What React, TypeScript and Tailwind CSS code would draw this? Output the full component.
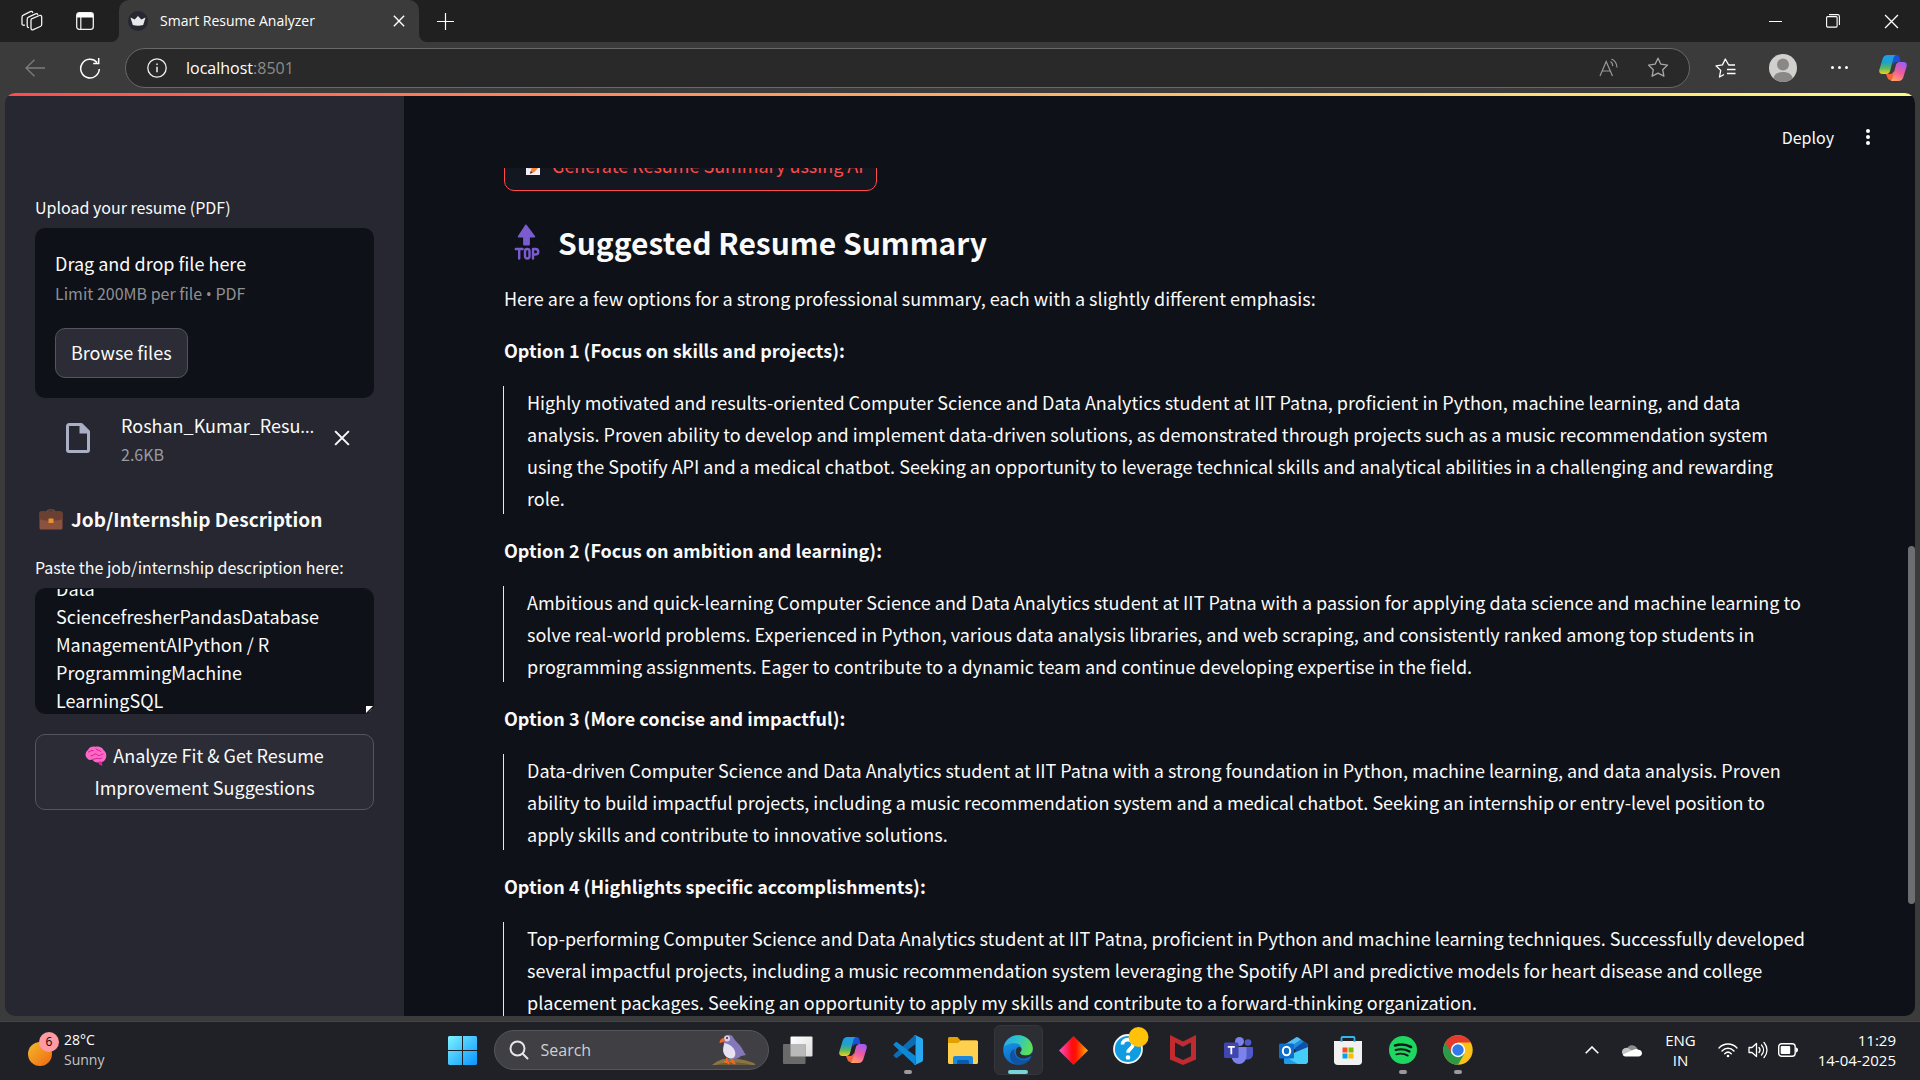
import { useLayoutEffect, useRef } from "react";
import type { ReactNode } from "react";

const jobText =
  "Data\nSciencefresherPandasDatabase\nManagementAIPython / R\nProgrammingMachine\nLearningSQL";

const options = [
  {
    title: "Option 1 (Focus on skills and projects):",
    body: "Highly motivated and results-oriented Computer Science and Data Analytics student at IIT Patna, proficient in Python, machine learning, and data analysis. Proven ability to develop and implement data-driven solutions, as demonstrated through projects such as a music recommendation system using the Spotify API and a medical chatbot. Seeking an opportunity to leverage technical skills and analytical abilities in a challenging and rewarding role.",
  },
  {
    title: "Option 2 (Focus on ambition and learning):",
    body: "Ambitious and quick-learning Computer Science and Data Analytics student at IIT Patna with a passion for applying data science and machine learning to solve real-world problems. Experienced in Python, various data analysis libraries, and web scraping, and consistently ranked among top students in programming assignments. Eager to contribute to a dynamic team and continue developing expertise in the field.",
  },
  {
    title: "Option 3 (More concise and impactful):",
    body: "Data-driven Computer Science and Data Analytics student at IIT Patna with a strong foundation in Python, machine learning, and data analysis. Proven ability to build impactful projects, including a music recommendation system and a medical chatbot. Seeking an internship or entry-level position to apply skills and contribute to innovative solutions.",
  },
  {
    title: "Option 4 (Highlights specific accomplishments):",
    body: "Top-performing Computer Science and Data Analytics student at IIT Patna, proficient in Python and machine learning techniques. Successfully developed several impactful projects, including a music recommendation system leveraging the Spotify API and predictive models for heart disease and college placement packages. Seeking an opportunity to apply my skills and contribute to a forward-thinking organization.",
  },
];

/* ---------- Icons ---------- */

function CopilotIcon({ id }: { id: string }) {
  return (
    <svg viewBox="0 0 28 26" className="h-[26px] w-7" aria-hidden="true">
      <defs>
        <linearGradient id={id + "a"} x1="0" y1="0" x2="0" y2="1">
          <stop offset="0" stopColor="#1c9cf0" />
          <stop offset="0.4" stopColor="#23a0c8" />
          <stop offset="0.7" stopColor="#5fb85a" />
          <stop offset="1" stopColor="#f6cf1c" />
        </linearGradient>
        <linearGradient id={id + "b"} x1="0.7" y1="0" x2="0.3" y2="1">
          <stop offset="0" stopColor="#a05cf5" />
          <stop offset="0.5" stopColor="#ee5a9e" />
          <stop offset="1" stopColor="#ffa06a" />
        </linearGradient>
      </defs>
      <path d="M13 0h4.500c1.700 0 2.600 1 3 2.500L21.600 7h-4c-2 0-3 1-3.600 3l-1-4z" fill="#1a50d8" />
      <path d="M7 19h4c2 0 3-1 3.500-3l1.500 5c.5 2-.5 4-2.500 4h-2c-2 0-2.800-1-3.300-3z" fill="#f4643a" />
      <path d="M8.500 0H17c-1.600.5-2.300 2-2.800 4l-3 11.500c-.6 2.300-1.700 3.500-4 3.500H3.500C.8 19-.3 17 .4 14.500L3.600 4C4.400 1.500 6 0 8.500 0z" fill={"url(#" + id + "a)"} />
      <path d="M19.500 26H11c1.600-.5 2.300-2 2.800-4l3-11.500c.6-2.300 1.700-3.500 4-3.500h3.700c2.700 0 3.800 2 3.100 4.500L24.400 22c-.8 2.500-2.400 4-4.900 4z" fill={"url(#" + id + "b)"} />
    </svg>
  );
}

function WorkspacesIcon() {
  return (
    <svg viewBox="0 0 22 22" className="size-[22px]" fill="none" stroke="#f2f2f2" strokeWidth="1.300" strokeLinejoin="round" strokeLinecap="round" aria-hidden="true">
      <path d="M10.500 8.800l8-3.300c1.200-.4 2.200.2 2.200 1.400v7.500c0 1-.5 1.700-1.400 2.100l-7 3.200c-1.200.5-2.300-.1-2.300-1.400v-7.500c0-.9 0-1.600.5-2z" />
      <path d="M7.500 17.500c-1 0-1.300-.6-1.300-1.500V9.200c0-1 .4-1.700 1.300-2.100l7-3.300c1.100-.5 2-.2 2.200.8" />
      <path d="M3.500 15.200C2 15.400 1 15 1 13.700V7.200c0-1 .4-1.700 1.300-2.100l7-3.500c1.100-.5 2-.2 2.400.8" />
    </svg>
  );
}

function TabActionsIcon() {
  return (
    <svg viewBox="0 0 18 18" className="size-[18px]" aria-hidden="true">
      <rect x="0.700" y="0.700" width="16.600" height="16.600" rx="2.500" fill="none" stroke="#f2f2f2" strokeWidth="1.300" />
      <path d="M1 5.500V3a2 2 0 0 1 2-2h12a2 2 0 0 1 2 2v2.500z" fill="#fff" />
      <path d="M4.800 5v12" stroke="#f2f2f2" strokeWidth="1.200" />
    </svg>
  );
}

function CrownIcon() {
  return (
    <svg viewBox="0 0 20 20" className="size-5" aria-hidden="true">
      <circle cx="10" cy="10" r="10" fill="#262730" />
      <path d="M2.500 6.500l4.200 2.100L10 5l3.300 3.600 4.200-2.100-2.300 7.500c-3 1-7.400 1-10.400 0z" fill="#e8e8ec" />
    </svg>
  );
}

function Cross({ className, width = 1.3 }: { className: string; width?: number }) {
  return (
    <svg viewBox="0 0 14 14" className={className} stroke="currentColor" strokeWidth={width} aria-hidden="true">
      <path d="M1 1l12 12M13 1L1 13" />
    </svg>
  );
}

function BrainIcon() {
  return (
    <svg viewBox="0 0 22 20" className="mr-[6px] inline h-5 w-[22px] align-[-3px]" aria-hidden="true">
      <path d="M2 12C-.5 10 .5 5.500 3 4 4 1 8 0 10.500.8 14 0 17.500 1.500 18.500 4c3 2 3.500 6.500 2 9-1 2.200-2.500 2.800-3.700 2.800l.4 3.700c-2.200-.3-3.200-1.500-3.700-3.200C9.500 17 8 14.500 7.500 13.500 5 14.500 3 14 2 12z" fill="#fc69c4" />
      <path d="M3.500 6c2-.5 2.500-2 4.500-1.500M11 3c1.500 1.800 4 .8 5 2.600M6 10c2 0 2.500-2 4.500-2s2 2 4 1.500 2-2 3.500-1.500M8 13.200c2 .3 2.500-1 4.500-.8s2.500 1 4.500-.6" fill="none" stroke="#e01496" strokeWidth="1" strokeLinecap="round" />
      <path d="M13.500 15.500l3.300.3.400 3.700c-2.200-.3-3.300-2-3.700-4z" fill="#e8169e" />
    </svg>
  );
}

function BriefcaseIcon() {
  return (
    <svg viewBox="0 0 24 21" className="ml-1 h-[21px] w-6 shrink-0" aria-hidden="true">
      <path d="M8 3.500C8 1.500 9 .8 12 .8s4 .7 4 2.700" fill="none" stroke="#6d4534" strokeWidth="1.400" />
      <rect x="0.500" y="2.500" width="23" height="18" rx="1.500" fill="#8b5240" />
      <path d="M.5 4A1.500 1.500 0 0 1 2 2.500h20A1.500 1.500 0 0 1 23.500 4v6.200c-7 2-16 2-23 0z" fill="#6b4032" />
      <rect x="9.500" y="9.500" width="5" height="4.500" rx="0.500" fill="#e8912d" />
    </svg>
  );
}

function MemoIcon() {
  return (
    <svg viewBox="0 0 22 22" className="size-[22px]" aria-hidden="true">
      <path d="M4 1h14v20H4z" fill="#f3eef8" />
      <path d="M6 6h9M6 10h7M6 14h5" stroke="#c3b7d0" strokeWidth="1.200" />
      <path d="M17.500 6l3 3-8 9-4.500 1.800 1.300-4.800z" fill="#ff822d" />
      <path d="M8 19.800l.8-2.700 1.900 1.600z" fill="#402a32" />
    </svg>
  );
}

function TopIcon() {
  return (
    <svg viewBox="0 0 28 36" className="h-9 w-7 shrink-0" aria-hidden="true">
      <path d="M14.500.8L23 12c.5.8.1 1.400-.7 1.400h-4.400v6.800c0 .8-.4 1.200-1.200 1.200h-4.400c-.8 0-1.200-.4-1.200-1.200v-6.800H6.700c-.8 0-1.200-.6-.7-1.400L13.300.8c.4-.5.8-.5 1.200 0z" fill="#7b5cd0" />
      <g fill="none" stroke="#7b5cd0" strokeWidth="2.400" strokeLinecap="round" strokeLinejoin="round">
        <path d="M3.800 25h6.800M7.200 25v9.500" />
        <rect x="13" y="25" width="4.500" height="9.500" rx="2.200" />
        <path d="M21 34.500V25h2.500a2.700 2.700 0 0 1 0 5.500H21" />
      </g>
    </svg>
  );
}

function WindowsIcon() {
  return (
    <svg viewBox="0 0 29 29" className="size-[29px]" aria-hidden="true">
      <defs>
        <linearGradient id="win" x1="0" y1="0" x2="29" y2="29" gradientUnits="userSpaceOnUse">
          <stop offset="0" stopColor="#7df3ff" />
          <stop offset="1" stopColor="#0894ff" />
        </linearGradient>
      </defs>
      <path d="M1 0h13v14H0V1zM15 0h13l1 1v13H15zM0 15h14v14H1l-1-1zM15 15h14v13l-1 1H15z" fill="url(#win)" />
    </svg>
  );
}

function TaskViewIcon() {
  return (
    <svg viewBox="0 0 30 28" className="h-7 w-[30px]" aria-hidden="true">
      <defs>
        <linearGradient id="tv" x1="0" y1="0" x2="1" y2="1">
          <stop offset="0" stopColor="#fff" />
          <stop offset="1" stopColor="#dcdcdc" />
        </linearGradient>
      </defs>
      <rect x="7.500" y="0.500" width="22" height="20" rx="1" fill="url(#tv)" />
      <rect x="0" y="8" width="22.500" height="20" rx="1" fill="#6a6a6a" />
      <path d="M7.500 8h15v12.500h-15z" fill="#b9b9b9" />
    </svg>
  );
}

function VsCodeIcon() {
  return (
    <svg viewBox="0 0 30 30" className="size-[30px]" aria-hidden="true">
      <path d="M22 0L1 19.500c-.6.500-.6 1.200 0 1.700l1.700 1.500c.5.400 1 .4 1.500 0L22.500 9z" fill="#0b6db5" />
      <path d="M22 30L1 10.500c-.6-.5-.6-1.200 0-1.700l1.700-1.500c.5-.4 1-.4 1.500 0L22.500 21z" fill="#0f87d4" />
      <path d="M22 0l7 3.300c.6.300 1 .9 1 1.600v20.200c0 .7-.4 1.300-1 1.600L22 30c-.7.200-1.300 0-1.800-.5.900.7 2.300.1 2.300-1.200V1.700c0-1.300-1.400-1.900-2.300-1.200.5-.5 1.100-.7 1.800-.5z" fill="#27a9f2" />
    </svg>
  );
}

function ExplorerIcon() {
  return (
    <svg viewBox="0 0 30 27" className="h-[27px] w-[30px]" aria-hidden="true">
      <path d="M0 1.500C0 .7.700 0 1.500 0h8l3 3.500H28c1.100 0 2 .7 2 1.800V10H0z" fill="#e2a100" />
      <path d="M0 6h10l3-2.500h15.500c.8 0 1.500.7 1.500 1.500v20.500c0 .8-.7 1.500-1.500 1.500h-27C.7 27 0 26.300 0 25.500z" fill="#ffd04e" />
      <path d="M5 27v-6c0-1.100.9-2 2-2h16c1.100 0 2 .9 2 2v6z" fill="#1c87dc" />
      <path d="M9 27v-2.500c0-.8.700-1.500 1.500-1.500h9c.8 0 1.500.7 1.500 1.500V27z" fill="#0a5cab" />
    </svg>
  );
}

function EdgeIcon() {
  return (
    <svg viewBox="0 0 30 30" className="size-[30px]" aria-hidden="true">
      <defs>
        <linearGradient id="e1" x1="0" y1="0.200" x2="1" y2="0.500">
          <stop offset="0" stopColor="#2aa8ee" />
          <stop offset="0.500" stopColor="#2fc6c4" />
          <stop offset="1" stopColor="#62e04c" />
        </linearGradient>
        <linearGradient id="e2" x1="0" y1="0" x2="0.400" y2="1">
          <stop offset="0" stopColor="#1aa0ea" />
          <stop offset="1" stopColor="#0b64c8" />
        </linearGradient>
      </defs>
      <circle cx="15" cy="15" r="14.800" fill="url(#e2)" />
      <path d="M.8 12C2 5 8 .2 15 .2 24 .2 29.800 7 29.800 13.500c0 4.200-3.200 7-7 7-3.500 0-5.800-1.300-5.800-2.800 0-.8 1.500-1.500 1.500-3.800 0-3-3-5.700-7.300-5.700C6.500 8.200 2.500 10 .8 12z" fill="url(#e1)" />
      <path d="M11.500 14c-1.300 7 4.500 12 10.500 11.500 2.500-.2 4.600-1.300 5.800-2.200C25 28 20.500 29.800 16 29.800 9 29.800 5.500 23 7.500 18c.9-2.200 2.400-3.400 4-4z" fill="#10549f" />
      <path d="M14.500 12.500c-1 1-1.800 2.400-1.800 4.200 0 4.700 4.500 7.300 9 6.800 2.500-.3 4.200-1.200 5.500-2.200l2.800 0v-4c-2 2.500-4.500 3.200-7.200 3.200-3.500 0-5.800-1.300-5.800-2.800 0-.8 1.500-1.500 1.500-3.300 0-1.200-1-2.400-2-2.400-.8 0-1.500.1-2 .5z" fill="#2d2e33" />
    </svg>
  );
}

function DiamondIcon() {
  return (
    <svg viewBox="0 0 29 29" className="size-[29px]" aria-hidden="true">
      <defs>
        <linearGradient id="dia" x1="0" y1="0" x2="1" y2="0">
          <stop offset="0" stopColor="#ff4fd0" />
          <stop offset="0.450" stopColor="#ff0a12" />
          <stop offset="0.600" stopColor="#ff1800" />
          <stop offset="1" stopColor="#ffb400" />
        </linearGradient>
      </defs>
      <path d="M14.500 0L29 14.500 14.500 29 0 14.500z" fill="url(#dia)" />
    </svg>
  );
}

function HelpIcon() {
  return (
    <svg viewBox="0 0 36 38" className="-mt-2 ml-1.5 h-[38px] w-9" aria-hidden="true">
      <circle cx="15" cy="22" r="14" fill="#0f9ce0" stroke="#f2f6f8" strokeWidth="1.800" />
      <path d="M9.500 17.500c0-6.500 10.500-6.500 10.500 0 0 4-5 4-5 8.200" fill="none" stroke="#fff" strokeWidth="3.600" />
      <circle cx="15" cy="30.500" r="2.300" fill="#fff" />
      <circle cx="25.500" cy="10" r="10" fill="#ffc10a" />
    </svg>
  );
}

function McAfeeIcon() {
  return (
    <svg viewBox="0 0 26 30" className="h-[30px] w-[26px]" aria-hidden="true">
      <path d="M0 0l13 6.500L26 0v24.500L13 30 0 24.500zM5 7.500v13.700l8 3.800 8-3.800V7.500l-8 4.300z" fill="#bf2b2e" fillRule="evenodd" />
    </svg>
  );
}

function TeamsIcon() {
  return (
    <svg viewBox="0 0 29 27" className="h-[27px] w-[29px]" aria-hidden="true">
      <circle cx="24" cy="5.500" r="3.300" fill="#5059c9" />
      <path d="M19 10h9c.6 0 1 .4 1 1v6a5.500 5.500 0 0 1-8 5z" fill="#5059c9" />
      <circle cx="15.500" cy="4.500" r="4.500" fill="#7b83eb" />
      <path d="M9 10h12.500c.6 0 1 .4 1 1v8.500a7.500 7.500 0 0 1-15 0V11z" fill="#7b83eb" />
      <rect x="0" y="5.500" width="14.500" height="15.500" rx="1.500" fill="#4046ae" />
      <path d="M3.800 9.800h7M7.300 9.800v7.500" stroke="#fff" strokeWidth="1.800" />
    </svg>
  );
}

function OutlookIcon() {
  return (
    <svg viewBox="0 0 29 27" className="h-[27px] w-[29px]" aria-hidden="true">
      <path d="M5 8L17 .6c.6-.4 1.400-.4 2 0L28 6.500c.6.400 1 1 1 1.700V12H5z" fill="#1b8bdc" />
      <path d="M11 4.200L17 .6c.6-.4 1.400-.4 2 0L22 2.500 12 9H5V8z" fill="#53bdf5" />
      <path d="M16 11l9-6.500 3.500 2.500.5 4-12 9z" fill="#0f4fa8" />
      <path d="M5 20l24-10v14.500c0 1.400-1.100 2.500-2.500 2.500h-19A2.500 2.500 0 0 1 5 24.500z" fill="#45cdf7" />
      <path d="M5 19l14 8H7.500A2.500 2.500 0 0 1 5 24.500z" fill="#1b9ce8" />
      <rect x="0" y="6.500" width="15" height="15" rx="1.500" fill="#0d6ed2" />
      <ellipse cx="7.500" cy="14" rx="3.700" ry="4.300" fill="none" stroke="#fff" strokeWidth="2" />
    </svg>
  );
}

function StoreIcon() {
  return (
    <svg viewBox="0 0 28 29" className="h-[29px] w-7" aria-hidden="true">
      <path d="M0 5h28v20.500c0 2-1.500 3.500-3.500 3.500h-21C1.500 29 0 27.500 0 25.500z" fill="#f1f1f1" />
      <path d="M7.500 6V2c0-.6.400-1 1-1h11c.6 0 1 .4 1 1v4" fill="none" stroke="#31b5ef" strokeWidth="1.800" />
      <path d="M8.500 11.500h5v5h-5z" fill="#f25022" />
      <path d="M14.500 11.500h5v5h-5z" fill="#7fba00" />
      <path d="M8.500 17.500h5v5h-5z" fill="#00a4ef" />
      <path d="M14.500 17.500h5v5h-5z" fill="#ffb900" />
    </svg>
  );
}

function SpotifyIcon() {
  return (
    <svg viewBox="0 0 28 28" className="size-7" aria-hidden="true">
      <circle cx="14" cy="14" r="14" fill="#1ed760" />
      <g fill="none" stroke="#15181a" strokeLinecap="round">
        <path d="M6 9.500c5.500-1.500 11.500-1 16 1.500" strokeWidth="2.600" />
        <path d="M6.700 14c4.800-1.300 9.800-.8 13.800 1.500" strokeWidth="2.200" />
        <path d="M7.300 18.300c4-1.100 8-.7 11.500 1.300" strokeWidth="1.800" />
      </g>
    </svg>
  );
}

function ChromeIcon() {
  return (
    <svg viewBox="0 0 30 30" className="size-[30px]" aria-hidden="true">
      <circle cx="15" cy="15" r="14.700" fill="#fbc116" />
      <path d="M15 15L2.300 7.600a14.700 14.700 0 0 0 12.700 22.100l6.400-11z" fill="#2b9a47" />
      <path d="M2.300 7.600a14.700 14.700 0 0 1 25.500 0H15L8.600 18.700z" fill="#e33b2e" />
      <circle cx="15" cy="15" r="7.200" fill="#fff" />
      <circle cx="15" cy="15" r="5.700" fill="#2f7bea" />
    </svg>
  );
}

function PuffinIcon() {
  return (
    <svg viewBox="0 0 44 32" className="h-8 w-11" aria-hidden="true">
      <path d="M0 31c5-4 10-7 20-6.500 10 .5 14 2 19 3.500 3 .9 4 1.500 4.500 3z" fill="#8a7444" />
      <path d="M4 31c6-2 14-3 22-2.500 6 .4 10 1.500 14 2.500z" fill="#6d5c3c" />
      <path d="M12 4c1-3.500 7-4.500 9-1 1.500 3 3.500 4.500 7 8.500 2.500 3 4 7 6 9.500l-5 1c-2 2-5 3.500-9 3-6-1-10-6-8.500-12 .7-3-.5-6 .5-9z" fill="#8478b8" />
      <path d="M12.500 9c-1.500 5-2.500 9 1 13 2 2.200 5 3 7.500 2 3-1.500 3-6 .5-9.500S16 10 12.500 9z" fill="#e6e2f2" />
      <circle cx="15" cy="4.500" r="3" fill="#d9d2ea" />
      <circle cx="15" cy="4" r="1" fill="#2b2438" />
      <path d="M12 4c-2.500 0-4.500 2-4.500 5 2-.5 4-.8 5.500-2.500z" fill="#f2682c" />
      <path d="M15 24l-1 5M20 25l1 4.500M12 28l3-1 2 3M18 28l3-1 2 3" stroke="#f26a21" strokeWidth="1.800" fill="none" />
    </svg>
  );
}

/* ---------- Taskbar pieces ---------- */

type App = { name: string; icon: ReactNode; state?: "active" | "running" };

const apps: App[] = [
  { name: "Task View", icon: <TaskViewIcon /> },
  { name: "Copilot", icon: <CopilotIcon id="ct" /> },
  { name: "Visual Studio Code", icon: <VsCodeIcon />, state: "running" },
  { name: "File Explorer", icon: <ExplorerIcon /> },
  { name: "Microsoft Edge", icon: <EdgeIcon />, state: "active" },
  { name: "Diamond", icon: <DiamondIcon /> },
  { name: "Get Help", icon: <HelpIcon /> },
  { name: "McAfee", icon: <McAfeeIcon /> },
  { name: "Microsoft Teams", icon: <TeamsIcon /> },
  { name: "Outlook", icon: <OutlookIcon /> },
  { name: "Microsoft Store", icon: <StoreIcon /> },
  { name: "Spotify", icon: <SpotifyIcon />, state: "running" },
  { name: "Google Chrome", icon: <ChromeIcon />, state: "running" },
];

function TaskbarApp({ app }: { app: App }) {
  return (
    <button
      aria-label={app.name}
      className="relative flex h-[50px] w-[55px] shrink-0 items-center justify-center"
    >
      {app.state === "active" && (
        <span className="absolute inset-x-[3px] inset-y-0 rounded-md border border-[#35363a] bg-[#2d2e33]" />
      )}
      <span className="relative">{app.icon}</span>
      {app.state === "active" && (
        <span className="absolute bottom-px h-1 w-5 rounded-full bg-[#76d3d9]" />
      )}
      {app.state === "running" && (
        <span className="absolute bottom-px h-1 w-2 rounded-full bg-[#9a9a9c]" />
      )}
    </button>
  );
}

function Taskbar() {
  return (
    <footer className="grid h-[59px] shrink-0 grid-cols-[1fr_auto_1fr] items-center border-t border-[#454545] bg-[#202126] pb-[2px] font-['Open_Sans',sans-serif] text-white">
      <button className="flex items-center gap-[5px] pl-7 text-left">
        <span className="relative block h-9 w-[31px]">
          <span className="absolute bottom-0.5 left-0 size-6 rounded-full bg-linear-to-br from-[#f0b92e] to-[#f0640c]" />
          <span className="absolute right-0 top-0 flex size-5 items-center justify-center rounded-full bg-[#ff99a4] text-xs text-black">
            6
          </span>
        </span>
        <span className="flex flex-col text-sm leading-5">
          <span>28°C</span>
          <span className="text-[#c4c4c6]">Sunny</span>
        </span>
      </button>

      <div className="flex items-center">
        <button aria-label="Start" className="flex h-[50px] w-[55px] items-center justify-center">
          <WindowsIcon />
        </button>
        <label className="ml-1 mr-0.5 flex h-10 w-[275px] items-center rounded-full border border-[#56565a] bg-[#3f3f44] pl-[14px] pr-3">
          <svg viewBox="0 0 20 20" className="size-5 shrink-0" fill="none" stroke="#e6e6e8" strokeWidth="2" strokeLinecap="round" aria-hidden="true">
            <circle cx="8.500" cy="8.500" r="7" />
            <path d="M14 14l4.500 4.500" />
          </svg>
          <input
            type="text"
            placeholder="Search"
            aria-label="Search"
            className="ml-3 min-w-0 flex-1 bg-transparent text-base outline-none placeholder:text-[#cfcfd2]"
          />
          <PuffinIcon />
        </label>
        {apps.map((app) => (
          <TaskbarApp key={app.name} app={app} />
        ))}
      </div>

      <div className="flex items-center justify-end pr-6 text-[15px] leading-5">
        <button aria-label="Show hidden icons">
          <svg viewBox="0 0 14 8" className="h-2 w-[14px]" fill="none" stroke="#fff" strokeWidth="1.600" aria-hidden="true">
            <path d="M.7 7.300L7 1l6.300 6.300" />
          </svg>
        </button>
        <svg viewBox="0 0 20 14" className="ml-[23px] h-[14px] w-5" aria-hidden="true">
          <path d="M5 6a5.500 5.500 0 0 1 10-1l2 5H2z" fill="#8c8c8e" />
          <path d="M0 10a4.500 4.500 0 0 1 7.500-4L17 12H3a3 3 0 0 1-3-2z" fill="#c4c4c6" />
          <path d="M4.500 13.500C2.500 13.500 1 13 .7 11.500L12 6.500c1-.7 3-.8 4.500.3 2 .2 3.500 1.500 3.500 3.500s-1.500 3.200-3.500 3.200z" fill="#fff" />
        </svg>
        <button className="ml-[23px] flex flex-col items-center">
          <span>ENG</span>
          <span>IN</span>
        </button>
        <button aria-label="Wi-Fi, sound and battery" className="ml-[22px] flex items-center gap-[10px]">
          <svg viewBox="0 0 20 16" className="h-4 w-5" fill="none" stroke="#fff" strokeWidth="1.400" strokeLinecap="round" aria-hidden="true">
            <path d="M1 6c5-5.300 13-5.300 18 0M4 9c3.300-3.600 8.700-3.600 12 0M6.700 11.700c2-2 4.600-2 6.600 0" />
            <circle cx="10" cy="14" r="1.300" fill="#fff" stroke="none" />
          </svg>
          <svg viewBox="0 0 20 18" className="h-[18px] w-5" fill="none" stroke="#fff" strokeWidth="1.300" strokeLinejoin="round" strokeLinecap="round" aria-hidden="true">
            <path d="M1 6.500h3L8.500 2.500v13L4 11.500H1z" />
            <path d="M11 6.500c1.300 1.500 1.300 3.500 0 5M13.500 4c2.700 3 2.700 7 0 10M16 1.500c4 4.500 4 10.500 0 15" />
          </svg>
          <svg viewBox="0 0 20 14" className="h-[14px] w-5" aria-hidden="true">
            <rect x="0.700" y="0.700" width="16.500" height="12.600" rx="3" fill="none" stroke="#fff" strokeWidth="1.400" />
            <rect x="2.700" y="3" width="9.500" height="8" rx="1" fill="#fff" />
            <path d="M18 4.500c1.300.3 2 1.200 2 2.500s-.7 2.200-2 2.500z" fill="#fff" />
          </svg>
        </button>
        <button className="ml-5 flex flex-col items-end">
          <span>11:29</span>
          <span>14-04-2025</span>
        </button>
      </div>
    </footer>
  );
}

/* ---------- Browser chrome ---------- */

function TabStrip() {
  return (
    <header className="flex h-[42px] shrink-0 items-center bg-[#202020] text-white">
      <button aria-label="Workspaces" className="ml-[21px]">
        <WorkspacesIcon />
      </button>
      <button aria-label="Tab actions" className="ml-[33px]">
        <TabActionsIcon />
      </button>
      <span className="ml-[17px] size-2 self-end bg-[#3b3b3b]">
        <span className="block size-2 rounded-br-lg bg-[#202020]" />
      </span>
      <div className="flex h-full w-[300px] items-center rounded-t-[10px] bg-[#3b3b3b] pl-[9px] pr-[14px]">
        <CrownIcon />
        <span className="ml-3 flex-1 text-sm">Smart Resume Analyzer</span>
        <button aria-label="Close tab">
          <Cross className="size-3" width={1.6} />
        </button>
      </div>
      <span className="size-2 self-end bg-[#3b3b3b]">
        <span className="block size-2 rounded-bl-lg bg-[#202020]" />
      </span>
      <button aria-label="New tab" className="ml-[10px]">
        <svg viewBox="0 0 17 17" className="size-[17px]" stroke="#fff" strokeWidth="1.200" aria-hidden="true">
          <path d="M8.500 0v17M0 8.500h17" />
        </svg>
      </button>
      <div className="ml-auto flex h-full">
        <button aria-label="Minimize" className="flex w-[58px] items-center justify-center">
          <span className="h-px w-[13px] bg-white" />
        </button>
        <button aria-label="Restore" className="flex w-[58px] items-center justify-center">
          <svg viewBox="0 0 14 14" className="size-[14px]" fill="none" stroke="#fff" strokeWidth="1.100" aria-hidden="true">
            <rect x="0.600" y="2.600" width="10.500" height="10.500" rx="1" />
            <path d="M3 .6h8.500a1.900 1.900 0 0 1 1.900 1.900V11" />
          </svg>
        </button>
        <button aria-label="Close" className="flex w-[58px] items-center justify-center">
          <Cross className="size-[15px]" width={1.2} />
        </button>
      </div>
    </header>
  );
}

function Toolbar() {
  return (
    <nav className="flex h-[51px] shrink-0 items-center bg-[#3b3b3b]">
      <button aria-label="Back" className="ml-[25px]">
        <svg viewBox="0 0 20 18" className="h-[18px] w-5" fill="none" stroke="#7d7d7d" strokeWidth="1.300" aria-hidden="true">
          <path d="M9.500.7L1 9l8.500 8.300M1 9h19" />
        </svg>
      </button>
      <button aria-label="Refresh" className="ml-[34px]">
        <svg viewBox="0 0 22 22" className="size-[22px]" fill="none" stroke="#fff" strokeWidth="1.500" aria-hidden="true">
          <path d="M18 5.500A9.300 9.300 0 1 0 20.300 12M19.700 1v5.500h-5.500" />
        </svg>
      </button>
      <div className="ml-6 flex h-10 flex-1 items-center rounded-full border border-[#686868] bg-[#292929] pl-[21px] pr-5">
        <svg viewBox="0 0 20 20" className="size-5" fill="none" stroke="#f0f0f0" strokeWidth="1.300" aria-hidden="true">
          <circle cx="10" cy="10" r="9.200" />
          <path d="M10 8.800v5.500M10 5.500v1.600" strokeWidth="1.500" />
        </svg>
        <div className="ml-[19px] flex-1 text-base text-[#8b8b8b]">
          <span className="text-white">localhost</span>:8501
        </div>
        <button aria-label="Read aloud">
          <svg viewBox="0 0 20 20" className="size-5" fill="none" stroke="#9a9a9a" strokeWidth="1.200" aria-hidden="true">
            <path d="M1 18L7.200 3.500 13.500 18M3.200 13h8M11.500 3.500c1.500 1 2.300 2.500 2.300 4.500M12.500 1c3.500 1.500 5.300 4.500 5.500 8.500" />
          </svg>
        </button>
        <button aria-label="Add to favorites" className="ml-7">
          <svg viewBox="0 0 22 21" className="h-[21px] w-[22px]" fill="none" stroke="#a8a8a8" strokeWidth="1.300" strokeLinejoin="round" aria-hidden="true">
            <path d="M11 1.200l2.900 6 6.600.9-4.800 4.600 1.200 6.500L11 16.100l-5.900 3.100 1.200-6.500L1.500 8.100l6.600-.9z" />
          </svg>
        </button>
      </div>
      <button aria-label="Favorites" className="ml-[25px]">
        <svg viewBox="0 0 21 20" className="h-5 w-[21px]" fill="none" stroke="#fff" strokeWidth="1.300" strokeLinejoin="round" aria-hidden="true">
          <path d="M20 7h-6.300L10.300 1 7.500 6.900 1 7.800l4.700 4.600-1.200 6.600L9 16.500M12 11.500h8.500M12 15.500h8.500" />
        </svg>
      </button>
      <button aria-label="Profile" className="ml-[33px]">
        <svg viewBox="0 0 28 28" className="size-7" aria-hidden="true">
          <circle cx="14" cy="14" r="14" fill="#d2d0ce" />
          <circle cx="14" cy="10.500" r="6" fill="#8a8886" />
          <path d="M4.500 24.200C5 20 9 18 14 18s9 2 9.500 6.200a14 14 0 0 1-19 0z" fill="#8a8886" />
        </svg>
      </button>
      <button aria-label="Settings and more" className="ml-[34px] flex gap-1">
        <span className="size-[3px] rounded-full bg-white" />
        <span className="size-[3px] rounded-full bg-white" />
        <span className="size-[3px] rounded-full bg-white" />
      </button>
      <button aria-label="Copilot" className="ml-[31px] mr-[13px]">
        <CopilotIcon id="cb" />
      </button>
    </nav>
  );
}

/* ---------- Page ---------- */

function Sidebar() {
  const area = useRef<HTMLTextAreaElement>(null);
  useLayoutEffect(() => {
    if (area.current) area.current.scrollTop = 32;
  }, []);

  return (
    <aside className="w-[399px] shrink-0 bg-[#262730] px-[30px] pt-[98px]">
      <p className="text-base leading-8">Upload your resume (PDF)</p>
      <section className="mt-[5px] rounded-[10px] bg-[#0e1117] px-5 pb-5 pt-[19px]">
        <p className="text-lg leading-8">Drag and drop file here</p>
        <p className="mt-px text-base leading-[26px] text-[#8e9094]">
          Limit 200MB per file <span className="font-['Open_Sans',sans-serif]">•</span> PDF
        </p>
        <button className="mt-[21px] h-[50px] rounded-[10px] border border-[#53545c] bg-[#2b2c36] px-[15px] pb-0.5 text-lg">
          Browse files
        </button>
      </section>

      <div className="mt-[11px] flex items-center pl-[31px] pr-6">
        <svg viewBox="0 0 24 30" className="h-[30px] w-6 shrink-0" aria-hidden="true">
          <path d="M3 1.500h12.500l7 7V27a1.500 1.500 0 0 1-1.500 1.500H3A1.500 1.500 0 0 1 1.500 27V3A1.500 1.500 0 0 1 3 1.500z" fill="none" stroke="#a9afc4" strokeWidth="3" strokeLinejoin="round" />
          <path d="M13.500 1.500h2l7 7v2h-9z" fill="#a9afc4" />
        </svg>
        <div className="ml-[31px] min-w-0 flex-1">
          <p className="whitespace-nowrap text-lg leading-8">
            Roshan_Kumar_Resu<span className="font-['Open_Sans',sans-serif]">…</span>
          </p>
          <p className="text-base leading-6 text-[#9a9ba2]">2.6KB</p>
        </div>
        <button aria-label="Remove file">
          <Cross className="size-4" width={1.8} />
        </button>
      </div>

      <h3 className="mt-[35px] flex items-center gap-2 text-[19px] font-bold leading-9">
        <BriefcaseIcon />
        Job/Internship Description
      </h3>
      <label htmlFor="job" className="mt-[14px] block text-base leading-8">
        Paste the job/internship description here:
      </label>
      <div className="relative mt-[5px]">
        <textarea
          id="job"
          ref={area}
          defaultValue={jobText}
          className="block h-[126px] w-full resize-none rounded-[10px] border border-[#0e1117] bg-[#0e1117] px-5 py-[17px] text-lg leading-7 outline-none [scrollbar-width:none]"
        />
        <svg viewBox="0 0 7 7" className="absolute bottom-px right-px size-[7px]" aria-hidden="true">
          <path d="M0 0h7L0 7z" fill="#fff" />
          <path d="M3 6l3-3" stroke="#555" strokeWidth="1" />
        </svg>
      </div>
      <button className="mt-5 w-full rounded-[10px] border border-[#53545c] bg-[#2b2c36] px-[15px] pb-[6px] pt-1 text-lg leading-8">
        <BrainIcon />
        Analyze Fit &amp; Get Resume Improvement Suggestions
      </button>
    </aside>
  );
}

function Main() {
  return (
    <main className="relative flex min-w-0 flex-1 flex-col bg-[#0e1117]">
      <div className="flex h-[75px] shrink-0 items-center justify-end pr-[45px] pt-3">
        <button className="text-base">Deploy</button>
        <button aria-label="Menu" className="ml-8 flex flex-col items-center gap-[2px]">
          <span className="size-1 rounded-full bg-white" />
          <span className="size-1 rounded-full bg-white" />
          <span className="size-1 rounded-full bg-white" />
        </button>
      </div>
      <div className="min-h-0 flex-1 overflow-hidden pl-[100px] pr-[104px]">
        <button className="-mt-[27px] flex h-[50px] items-center gap-2 rounded-[10px] border border-[#ff4b4b] bg-[#131720] pb-0.5 pl-[17px] pr-3 text-lg text-[#ff4b4b]">
          <MemoIcon />
          Generate Resume Summary ussing AI
        </button>
        <h2 className="mt-[25px] flex items-center gap-[18px] pl-2 text-[30px] font-bold leading-[52px]">
          <TopIcon />
          Suggested Resume Summary
        </h2>
        <p className="mt-[14px] text-lg leading-8">
          Here are a few options for a strong professional summary, each with a slightly different emphasis:
        </p>
        {options.map((option) => (
          <section key={option.title}>
            <p className="mt-5 text-lg font-bold leading-8">{option.title}</p>
            <blockquote className="-ml-px mt-5 border-l border-[#e6e8ee] pl-[23px] text-lg leading-8">
              {option.body}
            </blockquote>
          </section>
        ))}
      </div>
      <span className="absolute right-0 top-[453px] h-[358px] w-[7px] rounded-full bg-[#6d6e72]" />
    </main>
  );
}

export default function App() {
  return (
    <div className="flex h-screen flex-col overflow-hidden bg-[#3b3b3b] font-['Open_Sans',sans-serif]">
      <TabStrip />
      <Toolbar />
      <div className="relative mx-[5px] mb-[5px] flex min-h-0 flex-1 overflow-hidden rounded-[10px] font-['Noto_Sans_CJK_SC',sans-serif] text-[#fafafa]">
        <Sidebar />
        <Main />
        <div className="absolute inset-x-0 top-0 h-[3px] bg-linear-to-r from-[#ff4b4b] to-[#fffd80]" />
      </div>
      <Taskbar />
    </div>
  );
}
